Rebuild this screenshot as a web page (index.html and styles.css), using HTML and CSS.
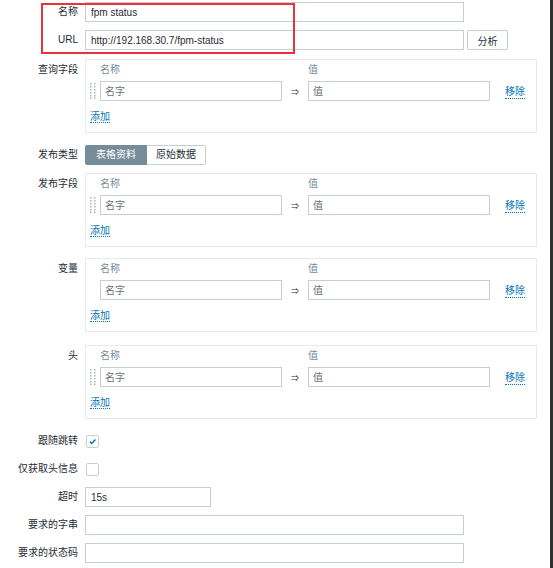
FILE: index.html
```html
<!DOCTYPE html>
<html lang="zh">
<head>
<meta charset="utf-8">
<title>HTTP agent</title>
<link rel="stylesheet" href="styles.css">
</head>
<body>
<div class="page">
  <div class="annot"></div>
  <div class="form">
    <div class="row r-name">
      <div class="lbl">名称</div>
      <input class="text wide" type="text" value="fpm status">
    </div>
    <div class="row r-url">
      <div class="lbl">URL</div>
      <input class="text wide" type="text" value="http://192.168.30.7/fpm-status">
      <button class="btn" type="button">分析</button>
    </div>

    <div class="row r-query">
      <div class="lbl lbl-box">查询字段</div>
      <div class="box">
        <div class="kv">
          <span></span><span class="hdr">名称</span><span></span><span class="hdr">值</span><span></span>
          <span class="handle"><svg width="6" height="16" viewBox="0 0 6 16"><g fill="#aab6bd"><rect x="0" y="0" width="1.5" height="1.5"/><rect x="4" y="0" width="1.5" height="1.5"/><rect x="0" y="3" width="1.5" height="1.5"/><rect x="4" y="3" width="1.5" height="1.5"/><rect x="0" y="6" width="1.5" height="1.5"/><rect x="4" y="6" width="1.5" height="1.5"/><rect x="0" y="9" width="1.5" height="1.5"/><rect x="4" y="9" width="1.5" height="1.5"/><rect x="0" y="12" width="1.5" height="1.5"/><rect x="4" y="12" width="1.5" height="1.5"/><rect x="0" y="14.5" width="1.5" height="1.5"/><rect x="4" y="14.5" width="1.5" height="1.5"/></g></svg></span>
          <input class="text cell" type="text" placeholder="名字">
          <span class="arrow">⇒</span>
          <input class="text cell" type="text" placeholder="值">
          <a class="link rm" href="#">移除</a>
        </div>
        <div class="add"><a class="link" href="#">添加</a></div>
      </div>
    </div>

    <div class="row r-type">
      <div class="lbl">发布类型</div>
      <div class="seg">
        <span class="seg-btn on">表格资料</span><span class="seg-btn">原始数据</span>
      </div>
    </div>

    <div class="row r-pub">
      <div class="lbl lbl-box">发布字段</div>
      <div class="box">
        <div class="kv">
          <span></span><span class="hdr">名称</span><span></span><span class="hdr">值</span><span></span>
          <span class="handle"><svg width="6" height="16" viewBox="0 0 6 16"><g fill="#aab6bd"><rect x="0" y="0" width="1.5" height="1.5"/><rect x="4" y="0" width="1.5" height="1.5"/><rect x="0" y="3" width="1.5" height="1.5"/><rect x="4" y="3" width="1.5" height="1.5"/><rect x="0" y="6" width="1.5" height="1.5"/><rect x="4" y="6" width="1.5" height="1.5"/><rect x="0" y="9" width="1.5" height="1.5"/><rect x="4" y="9" width="1.5" height="1.5"/><rect x="0" y="12" width="1.5" height="1.5"/><rect x="4" y="12" width="1.5" height="1.5"/><rect x="0" y="14.5" width="1.5" height="1.5"/><rect x="4" y="14.5" width="1.5" height="1.5"/></g></svg></span>
          <input class="text cell" type="text" placeholder="名字">
          <span class="arrow">⇒</span>
          <input class="text cell" type="text" placeholder="值">
          <a class="link rm" href="#">移除</a>
        </div>
        <div class="add"><a class="link" href="#">添加</a></div>
      </div>
    </div>

    <div class="row r-var">
      <div class="lbl lbl-box">变量</div>
      <div class="box">
        <div class="kv">
          <span></span><span class="hdr">名称</span><span></span><span class="hdr">值</span><span></span>
          <span></span>
          <input class="text cell" type="text" placeholder="名字">
          <span class="arrow">⇒</span>
          <input class="text cell" type="text" placeholder="值">
          <a class="link rm" href="#">移除</a>
        </div>
        <div class="add"><a class="link" href="#">添加</a></div>
      </div>
    </div>

    <div class="row r-head">
      <div class="lbl lbl-box">头</div>
      <div class="box">
        <div class="kv">
          <span></span><span class="hdr">名称</span><span></span><span class="hdr">值</span><span></span>
          <span class="handle"><svg width="6" height="16" viewBox="0 0 6 16"><g fill="#aab6bd"><rect x="0" y="0" width="1.5" height="1.5"/><rect x="4" y="0" width="1.5" height="1.5"/><rect x="0" y="3" width="1.5" height="1.5"/><rect x="4" y="3" width="1.5" height="1.5"/><rect x="0" y="6" width="1.5" height="1.5"/><rect x="4" y="6" width="1.5" height="1.5"/><rect x="0" y="9" width="1.5" height="1.5"/><rect x="4" y="9" width="1.5" height="1.5"/><rect x="0" y="12" width="1.5" height="1.5"/><rect x="4" y="12" width="1.5" height="1.5"/><rect x="0" y="14.5" width="1.5" height="1.5"/><rect x="4" y="14.5" width="1.5" height="1.5"/></g></svg></span>
          <input class="text cell" type="text" placeholder="名字">
          <span class="arrow">⇒</span>
          <input class="text cell" type="text" placeholder="值">
          <a class="link rm" href="#">移除</a>
        </div>
        <div class="add"><a class="link" href="#">添加</a></div>
      </div>
    </div>

    <div class="row r-follow">
      <div class="lbl">跟随跳转</div>
      <span class="cb"><svg width="9" height="9" viewBox="0 0 10 10"><polyline points="2,5.2 4.2,7.3 8.2,2.8" fill="none" stroke="#0275b8" stroke-width="1.6"/></svg></span>
    </div>
    <div class="row r-small">
      <div class="lbl">仅获取头信息</div>
      <span class="cb"></span>
    </div>
    <div class="row r-small">
      <div class="lbl">超时</div>
      <input class="text short" type="text" value="15s">
    </div>
    <div class="row r-small">
      <div class="lbl">要求的字串</div>
      <input class="text wide" type="text" value="">
    </div>
    <div class="row r-small">
      <div class="lbl">要求的状态码</div>
      <input class="text wide" type="text" value="">
    </div>
  </div>
</div>
</body>
</html>
```

FILE: styles.css
```css
html, body {
  margin: 0;
  padding: 0;
  background: #ffffff;
}

.page {
  position: relative;
  box-sizing: border-box;
  width: 553px;
  height: 568px;
  overflow: hidden;
  padding-top: 2px;
  border-right: 3px solid #303030;
  font-family: "Liberation Sans", "Noto Sans CJK SC", sans-serif;
  font-size: 10px;
  color: #1f2c33;
}

.annot {
  position: absolute;
  left: 41px;
  top: 3px;
  width: 254px;
  height: 51px;
  box-sizing: border-box;
  border: 2px solid #e8333a;
  pointer-events: none;
}

.row {
  display: flex;
  align-items: flex-start;
}

.lbl {
  flex: none;
  box-sizing: border-box;
  width: 85px;
  padding-right: 7px;
  text-align: right;
  line-height: 20px;
  white-space: nowrap;
}

.lbl-box {
  line-height: 14px;
  padding-top: 4px;
}

.r-url { margin-top: 8px; }
.r-query { margin-top: 9px; }
.r-type { margin-top: 12px; }
.r-pub { margin-top: 8px; }
.r-var { margin-top: 11px; }
.r-head { margin-top: 13px; }
.r-follow { margin-top: 12px; }
.r-small { margin-top: 8px; }

.text {
  box-sizing: border-box;
  height: 20px;
  margin: 0;
  padding: 0 5px;
  border: 1px solid #c7ced2;
  border-radius: 0;
  background: #ffffff;
  font-family: "Liberation Sans", "Noto Sans CJK SC", sans-serif;
  font-size: 10px;
  color: #1f2c33;
  outline: none;
}

.text::placeholder {
  color: #6f6f6f;
  opacity: 1;
}

.wide { width: 379px; }
.short { width: 126px; }
.cell { width: 182px; padding: 0 4px; }

.btn {
  box-sizing: border-box;
  height: 20px;
  width: 41px;
  margin: 0 0 0 3px;
  padding: 0;
  border: 1px solid #c7ced2;
  border-radius: 2px;
  background: #ffffff;
  font-family: "Liberation Sans", "Noto Sans CJK SC", sans-serif;
  font-size: 10px;
  color: #1f2c33;
}

.box {
  box-sizing: border-box;
  width: 452px;
  border: 1px solid #e8ebed;
  padding: 3px 4px 8px;
}

.kv {
  display: grid;
  grid-template-columns: 10px 182px 26px 182px auto;
  grid-template-rows: 14px 20px;
  row-gap: 4px;
  align-items: center;
}

.hdr {
  line-height: 14px;
  color: #768d99;
}

.handle {
  display: flex;
  align-items: center;
  height: 20px;
}

.arrow {
  text-align: center;
  font-size: 8px;
  color: #1f2c33;
}

.link {
  color: #0275b8;
  text-decoration: none;
  border-bottom: 1px dotted #0275b8;
}

.rm {
  justify-self: start;
  margin-left: 15px;
  margin-top: 2px;
  line-height: 13px;
}

.add {
  margin-top: 9px;
  line-height: 14px;
}

.seg {
  display: flex;
}

.seg-btn {
  box-sizing: border-box;
  height: 20px;
  line-height: 18px;
  padding: 0 9px;
  border: 1px solid #c7ced2;
  background: #ffffff;
  color: #1f2c33;
}

.seg-btn + .seg-btn {
  border-left: none;
  border-radius: 0 2px 2px 0;
}

.seg-btn.on {
  background: #768d99;
  border-color: #768d99;
  color: #ffffff;
  padding: 0 10px;
  border-radius: 2px 0 0 2px;
}

.cb {
  box-sizing: border-box;
  display: flex;
  align-items: center;
  justify-content: center;
  width: 13px;
  height: 13px;
  margin-top: 4px;
  margin-left: 1px;
  border: 1px solid #c7ced2;
  border-radius: 2px;
  background: #ffffff;
}
```
